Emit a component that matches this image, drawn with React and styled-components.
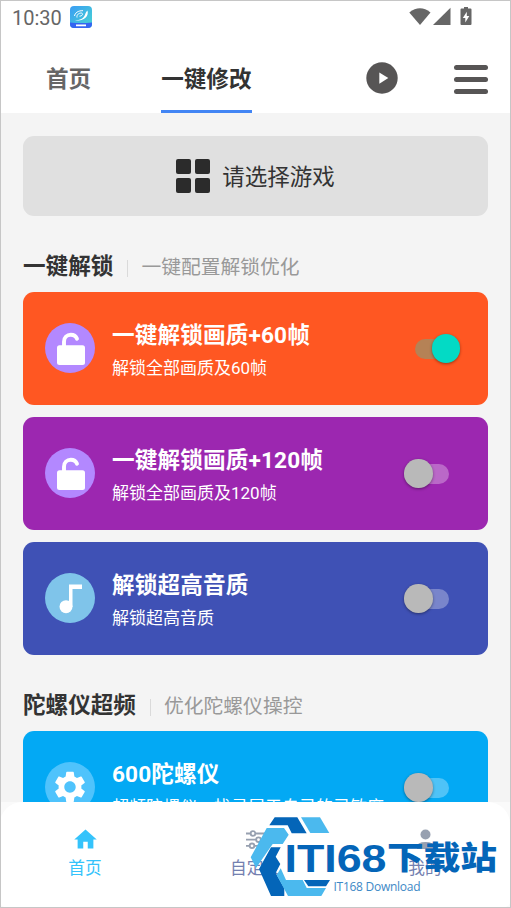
import React from 'react';
import styled, { createGlobalStyle } from 'styled-components'
import { MdHome, MdSettings } from 'react-icons/md'

const GlobalStyle = createGlobalStyle`
    * {
        box-sizing: border-box;
    }
    body {
        margin: 0;
        font-family: Roboto, "Noto Sans CJK SC", sans-serif;
    }
    svg {
        display: block;
        flex: none;
    }
`

const Screen = styled.div`
    position: relative;
    display: flex;
    flex-direction: column;
    width: 511px;
    height: 908px;
    overflow: hidden;
    border: 1px solid #c6c6c6;
    background: #f4f4f4;
`

const StatusBar = styled.div`
    display: flex;
    align-items: center;
    height: 33px;
    padding: 0 38px 1px 11px;
    background: white;
    color: #666;
`

const Clock = styled.span`
    width: 58px;
    padding-top: 1px;
    font-size: 20px;
    line-height: 32px;
`

const StatusIcons = styled.div`
    margin-left: auto;
`

const Header = styled.header`
    display: flex;
    align-items: center;
    height: 79px;
    padding: 0 22px 0 45px;
    background: white;
`

const Tab = styled.div`
    height: 79px;
    margin-right: 70px;
    padding-top: 8px;
    border-bottom: 3px solid ${props => props.$active ? '#4285f4' : 'transparent'};
    color: ${props => props.$active ? '#333' : '#666'};
    font-size: 22.6px;
    font-weight: bold;
    line-height: 75px;
`

const PlayButton = styled.div`
    margin: 8px 56px 0 auto;
`

const MenuButton = styled.div`
    display: flex;
    flex-direction: column;
    gap: 7px;
    width: 34px;
    margin-top: 11px;

    span {
        height: 5px;
        border-radius: 3px;
        background: #575555;
    }
`

const Content = styled.main`
    flex: 1;
    min-height: 0;
    overflow: hidden;
    padding: 23px 22px 0;
`

const SelectGame = styled.div`
    display: flex;
    align-items: center;
    justify-content: center;
    gap: 12px;
    height: 80px;
    border-radius: 11px;
    background: #e0e0e0;
    color: #333;
    font-size: 22.5px;
`

const SelectLabel = styled.span`
    padding-bottom: 3px;
`

const Blocks = styled.div`
    display: grid;
    grid-template-columns: 15px 15px;
    grid-auto-rows: 15px;
    gap: 4px;

    span {
        border-radius: 2px;
        background: #2b2b2b;
    }
`

const SectionHead = styled.div`
    display: flex;
    align-items: center;
    height: 50px;
    margin-top: 26px;
`

const SectionTitle = styled.h2`
    margin: 0;
    color: #333;
    font-size: 22.6px;
    font-weight: bold;
    line-height: 50px;
`

const Divider = styled.span`
    width: 1px;
    height: 17px;
    margin: 2px 13px 0 14px;
    background: #dadada;
`

const SectionNote = styled.span`
    color: #999;
    font-size: 19.8px;
    line-height: 52px;
    padding-top: 2px;
`

const CardList = styled.div`
    display: flex;
    flex-direction: column;
    gap: 12px;
`

const Card = styled.div`
    display: flex;
    align-items: center;
    height: 113px;
    padding: 0 ${props => props.$on ? '28px' : '39px'} 1px 22px;
    border-radius: 11px;
    background: ${props => props.$color};
    color: white;
`

const IconCircle = styled.div`
    display: flex;
    align-items: center;
    justify-content: center;
    width: 50px;
    height: 50px;
    border-radius: 50%;
    background: ${props => props.$color};
`

const CardText = styled.div`
    flex: 1;
    margin-left: 17px;
    padding-top: 4px;
    white-space: nowrap;
`

const CardTitle = styled.div`
    font-size: 22.6px;
    font-weight: bold;
    letter-spacing: 0.15px;
    line-height: 36px;
`

const CardNote = styled.div`
    font-size: 17px;
    line-height: 28px;
`

const Track = styled.div`
    display: flex;
    align-items: center;
    justify-content: ${props => props.$on ? 'flex-end' : 'flex-start'};
    width: 45px;
    height: 20px;
    margin-top: 1px;
    border-radius: 10px;
    background: ${props => props.$on ? '#b58256' : 'rgba(255, 255, 255, 0.3)'};
`

const Thumb = styled.div`
    width: 28.5px;
    height: 28.5px;
    border-radius: 50%;
    background: ${props => props.$on ? '#03dac5' : '#b9b9b9'};
    box-shadow: 0 1px 3px rgba(0, 0, 0, 0.4);
`

const BottomNav = styled.nav`
    height: 105px;
    background: #fafafa;
`

const NavInner = styled.div`
    display: grid;
    grid-template-columns: 170px 170px 170px;
    height: 105px;
    margin-left: -1px;
    border-radius: 22px 22px 5px 5px;
    background: white;
`

const NavItem = styled.div`
    display: flex;
    flex-direction: column;
    align-items: center;
    padding-top: 24px;
    color: ${props => props.$active ? '#35c3fb' : '#7480b0'};
    font-size: 16.7px;
    line-height: 32px;
`

const Watermark = styled.svg`
    position: absolute;
    left: 248px;
    top: 813px;
`

const AppBadge = () => (
    <svg width="22" height="22" viewBox="0 0 22 22">
        <defs>
            <linearGradient id="badge" x1="0" y1="0" x2="1" y2="1">
                <stop offset="0" stopColor="#3a9cf4" />
                <stop offset="1" stopColor="#48d6d2" />
            </linearGradient>
            <clipPath id="badgeClip"><rect width="22" height="22" rx="4" /></clipPath>
        </defs>
        <g clipPath="url(#badgeClip)">
            <rect width="22" height="22" fill="url(#badge)" />
            <path d="M0 16.5q11 1 22 0V22H0z" fill="#3565f2" />
            <path d="M17.5 4.5c1.5 6-3 10.5-12.5 10.3 5-1 8.5-2 10-6 .7-1.8 1-3 2.5-4.3z" fill="white" />
            <path d="M4.5 10c.5-3 3.5-5.5 8.5-5.3M7 11.5c-.5-3 2-4.5 4.5-4.5 2 .8 1 3-2 3.2" fill="none" stroke="white" />
            <path d="M6 19.3h10" stroke="white" strokeWidth="1.8" />
        </g>
    </svg>
)

const SystemIcons = () => (
    <svg width="63" height="20" viewBox="0 0 63 20" fill="#666">
        <path d="M.3 5.5Q11 -2.8 21.5 5.5L11 18z" />
        <path d="M41.5 .7V18H24z" />
        <path d="M55 0h4v1.6h2.5q1 0 1 1V17q0 1-1 1h-9q-1 0-1-1V2.6q0-1 1-1H55z" />
        <path d="M57.8 4.8 53.8 11h2.500v4.500L60.300 9h-2.500z" fill="white" />
    </svg>
)

const LockIcon = () => (
    <svg width="50" height="50" viewBox="0 0 50 50">
        <path d="M19 24v-5.3c0-4 3-6.9 6.8-6.9 3 0 5.2 1.5 6.200 4" fill="none" stroke="white" strokeWidth="3.9" strokeLinecap="round" />
        <rect x="12" y="22.3" width="28" height="19.7" rx="2.5" fill="white" />
    </svg>
)

const NoteIcon = () => (
    <svg width="50" height="50" viewBox="0 0 50 50" fill="white">
        <path d="M24 11.5h13v4.5h-9.500v18H24z" />
        <circle cx="21" cy="33.7" r="6.5" />
    </svg>
)

const SlidersIcon = () => (
    <svg width="27" height="27" viewBox="0 0 27 27" fill="white" stroke="#97a0b0" strokeWidth="1.8">
        <path d="M4 7.5h19M4 13.7h19M4 19.8h19" />
        <circle cx="11" cy="7.5" r="2.3" />
        <circle cx="16.5" cy="13.7" r="2.3" />
        <circle cx="10" cy="19.8" r="2.3" />
    </svg>
)

const PersonIcon = () => (
    <svg width="27" height="27" viewBox="0 0 27 27" fill="#97a0b0">
        <circle cx="13.5" cy="8.5" r="5" />
        <path d="M5 23v-2.5q0-4.5 8.5-4.5t8.5 4.5V23z" />
    </svg>
)

const cards = [
    { title: '一键解锁画质+60帧', note: '解锁全部画质及60帧', color: '#ff5722', circle: '#b388ff', icon: <LockIcon />, on: true },
    { title: '一键解锁画质+120帧', note: '解锁全部画质及120帧', color: '#9c27b0', circle: '#b388ff', icon: <LockIcon /> },
    { title: '解锁超高音质', note: '解锁超高音质', color: '#3f51b5', circle: '#7fc4ea', icon: <NoteIcon /> },
]

const gyroCards = [
    { title: '600陀螺仪', note: '超频陀螺仪，找寻属于自己的灵敏度', color: '#03a9f4', circle: '#4fc3fc', icon: <MdSettings size={38} /> },
]

const Cards = ({ itemList }) => {
    const listItems = itemList.map((item, index) => {
    return (
        <Card key={index} $color={item.color} $on={item.on}>
            <IconCircle $color={item.circle}>{item.icon}</IconCircle>
            <CardText>
                <CardTitle>{item.title}</CardTitle>
                <CardNote>{item.note}</CardNote>
            </CardText>
            <Track $on={item.on}><Thumb $on={item.on} /></Track>
        </Card>
    )
    })
    return <CardList>{listItems}</CardList>
}

const SiteMark = () => (
    <Watermark width="256" height="90" viewBox="249 814 256 90">
        <g fill="#0465b8">
            <path d="M274.7 817.3h22.6l9.4 16h-15l-4-8h-18.4z" />
            <path d="M271 847.3h9.7l-5 9.4 4.6 7.3-4.6 9 8.6 15.3v7.7h-13.3l-12-27z" />
            <path d="M304 880h26l-4 6.3h-17.7z" />
        </g>
        <g fill="#4bb9ee">
            <path d="M301 817.3h19l9.3 15.7h-19z" />
            <path d="M266.7 828h17.3l4.7 6.7-6 9.3h-10L256 868l-5.3-10.7z" />
            <path d="M280.7 868.3 286 880h16.7l4 8H326l-4.700 8H288l-11.300-21z" />
        </g>
        <g fill="#0465b8">
            <text x="284.5" y="871.5" fontFamily="Liberation Sans, sans-serif" fontSize="39.5" fontWeight="700" textLength="102" lengthAdjust="spacingAndGlyphs">ITI68</text>
            <text x="387" y="869" fontFamily="Noto Sans CJK SC, sans-serif" fontSize="32" fontWeight="900" textLength="110" lengthAdjust="spacingAndGlyphs">下载站</text>
        </g>
        <text x="333.5" y="891" fill="#3d88c6" fontSize="12" fontFamily="Open Sans, sans-serif" textLength="87">IT168 Download</text>
    </Watermark>
)

const App = () => (
    <Screen>
        <GlobalStyle />
        <StatusBar>
            <Clock>10:30</Clock>
            <AppBadge />
            <StatusIcons><SystemIcons /></StatusIcons>
        </StatusBar>
        <Header>
            <Tab>首页</Tab>
            <Tab $active>一键修改</Tab>
            <PlayButton>
                <svg width="32" height="32" viewBox="0 0 32 32">
                    <circle cx="16" cy="16" r="15.7" fill="#575555" />
                    <path d="M13.3 10.5 22.3 16l-9 5.7z" fill="white" />
                </svg>
            </PlayButton>
            <MenuButton><span /><span /><span /></MenuButton>
        </Header>
        <Content>
            <SelectGame>
                <Blocks><span /><span /><span /><span /></Blocks>
                <SelectLabel>请选择游戏</SelectLabel>
            </SelectGame>
            <SectionHead>
                <SectionTitle>一键解锁</SectionTitle>
                <Divider />
                <SectionNote>一键配置解锁优化</SectionNote>
            </SectionHead>
            <Cards itemList={cards} />
            <SectionHead>
                <SectionTitle>陀螺仪超频</SectionTitle>
                <Divider />
                <SectionNote>优化陀螺仪操控</SectionNote>
            </SectionHead>
            <Cards itemList={gyroCards} />
        </Content>
        <BottomNav>
            <NavInner>
                <NavItem $active><MdHome size={27} />首页</NavItem>
                <NavItem><SlidersIcon />自定义</NavItem>
                <NavItem><PersonIcon />我的</NavItem>
            </NavInner>
        </BottomNav>
        <SiteMark />
    </Screen>
)

export default App
